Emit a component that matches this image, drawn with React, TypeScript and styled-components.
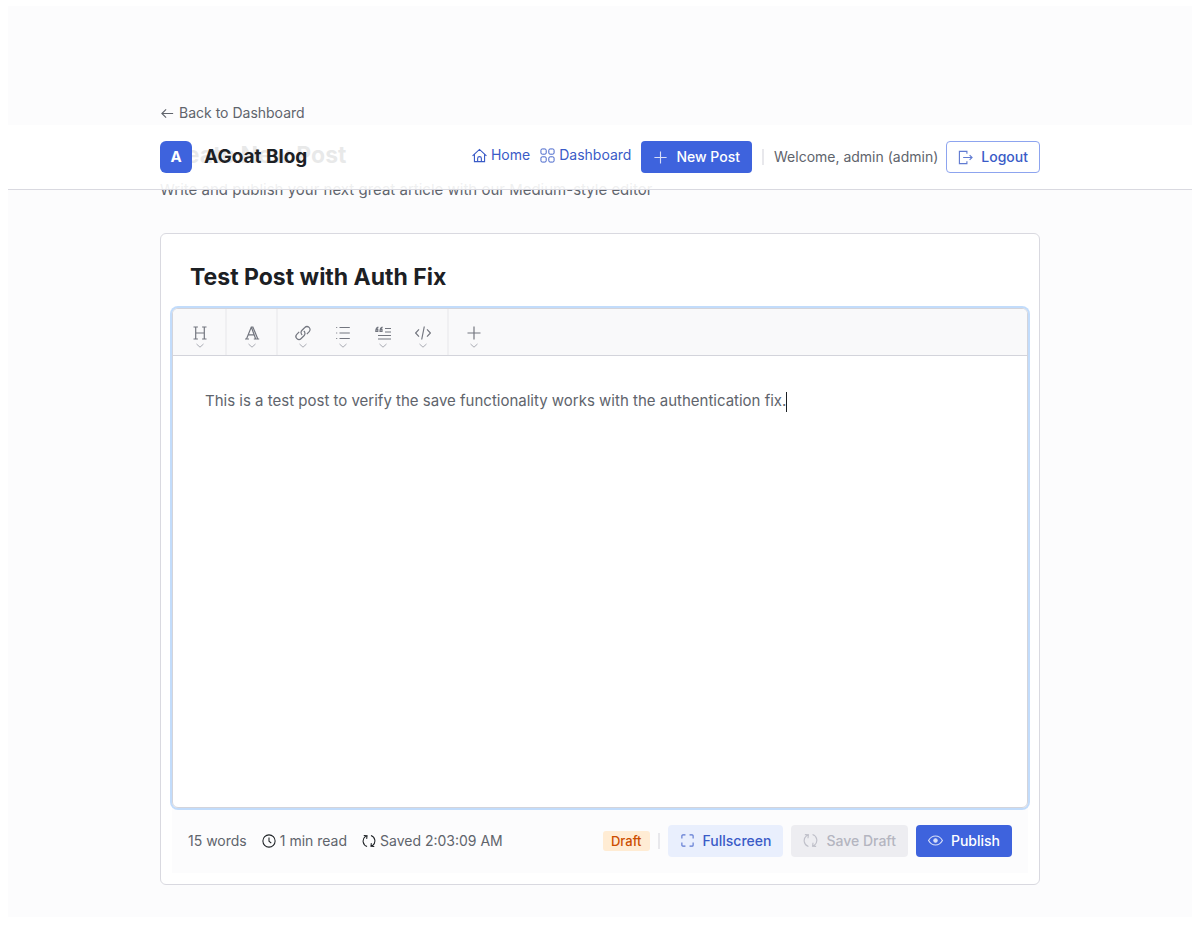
import React from "react";
import styled, { createGlobalStyle } from "styled-components";

const GlobalStyle = createGlobalStyle`
  * { box-sizing: border-box; }
  body {
    margin: 6px 0 10px 8px;
    background: #ffffff;
    color: #1c2024;
    font-family: Inter, "Liberation Sans", sans-serif;
    font-size: 14px;
    line-height: 20px;
  }
  h1, p { margin: 0; }
  button, input { font: inherit; }
`;

const Page = styled.div`
  position: relative;
  background: #fcfcfd;
  padding: 97px 0 32px;
`;

const Header = styled.header`
  position: absolute;
  top: 119px;
  left: 0;
  right: 0;
  z-index: 2;
  background: rgba(255, 255, 255, 0.9);
  border-bottom: 1px solid #d9d9e0;
`;

const Container = styled.div`
  max-width: 880px;
  margin: 0 auto;
`;

const HeaderRow = styled(Container)`
  display: flex;
  align-items: center;
  justify-content: space-between;
  height: 64px;
`;

const Brand = styled.a`
  display: flex;
  align-items: center;
  gap: 12px;
  color: #1c2024;
  text-decoration: none;
  font-size: 19px;
  font-weight: 700;
  line-height: 28px;
`;

const Logo = styled.span`
  display: grid;
  place-items: center;
  width: 32px;
  height: 32px;
  border-radius: 6px;
  background: #3e63dd;
  color: #ffffff;
  font-size: 15px;
`;

const Nav = styled.nav`
  display: flex;
  align-items: center;
  gap: 10px;
`;

const NavLink = styled.a`
  display: flex;
  align-items: center;
  gap: 4px;
  padding-bottom: 4px;
  color: #3a5bc7;
  text-decoration: none;
`;

const Account = styled.div`
  display: flex;
  align-items: center;
  gap: 8px;
  color: #60646c;
`;

const Separator = styled.span`
  width: 2px;
  height: 16px;
  background: #e8e8ec;
`;

type Variant = "solid" | "soft" | "outline" | "muted";
const variants: Record<Variant, string> = {
  solid: "background: #3e63dd; color: #ffffff;",
  soft: "background: #e9effd; color: #3a5bc7;",
  outline: "background: transparent; color: #3a5bc7; border: 1px solid #8da4ef; padding: 0 11px;",
  muted: "background: #ededf1; color: #b4b5c0;",
};

const Button = styled.button<{ $variant: Variant }>`
  display: flex;
  align-items: center;
  gap: 8px;
  height: 32px;
  padding: 0 12px;
  border: 0;
  border-radius: 4px;
  font-weight: 500;
  ${(p) => variants[p.$variant]}
  svg { opacity: 0.8; }
`;

const BackLink = styled.a`
  display: flex;
  align-items: center;
  gap: 4px;
  width: fit-content;
  color: #60646c;
  text-decoration: none;
`;

const Heading = styled.h1`
  margin-top: 16px;
  font-size: 23px;
  font-weight: 700;
  line-height: 32px;
`;

const Subtitle = styled.p`
  margin-top: 7px;
  color: #60646c;
  font-size: 15px;
  line-height: 24px;
`;

const Card = styled.section`
  margin-top: 31px;
  padding: 12px 11px 11px;
  background: #ffffff;
  border: 1px solid #d9d9e0;
  border-radius: 6px;
`;

const TitleInput = styled.input`
  display: block;
  width: 100%;
  height: 62px;
  padding: 0 18px;
  border: 0;
  outline: 0;
  background: transparent;
  color: #1c2024;
  font-size: 23px;
  font-weight: 700;
`;

const Editor = styled.div`
  position: relative;
  border: 1px solid #d3d4db;
  border-radius: 6px;
  box-shadow: 0 0 0 2px #c2dcfb;
  overflow: hidden;
`;

const Toolbar = styled.div`
  display: flex;
  background: #f9f9fa;
  border-bottom: 1px solid #d3d4db;
`;

const ToolGroup = styled.div`
  display: flex;
  padding: 0 4px 0 5px;
  border-right: 2px solid #f0f0f2;
  &:first-child { padding: 0 5px 0 7px; }
  &:last-child { border-right: 0; }
`;

const ToolButton = styled.button`
  display: flex;
  flex-direction: column;
  align-items: center;
  gap: 2px;
  width: 40px;
  height: 46px;
  padding: 16px 0 0;
  border: 0;
  background: transparent;
  color: #73767f;
`;

const Writing = styled.div`
  min-height: 451px;
  padding: 33px 32px;
  outline: 0;
  color: #60646c;
  font-size: 15px;
  line-height: 24px;
`;

const Caret = styled.span`
  display: inline-block;
  width: 1px;
  height: 20px;
  vertical-align: middle;
  background: #1c2024;
`;

const StatusBar = styled.footer`
  display: flex;
  align-items: center;
  justify-content: space-between;
  min-height: 65px;
  padding: 0 16px;
  background: #fcfcfd;
`;

const Stats = styled.div`
  display: flex;
  gap: 15px;
  color: #60646c;
`;

const Stat = styled.span`
  display: flex;
  align-items: center;
  gap: 4px;
  svg { color: #1c2024; }
`;

const Actions = styled.div`
  display: flex;
  align-items: center;
  gap: 8px;
`;

const Badge = styled.span`
  padding: 0 8px;
  border-radius: 3px;
  background: #ffecd4;
  color: #cc4e00;
  font-size: 13px;
  font-weight: 500;
`;

type IconName = keyof typeof shapes;
const shapes = {
  back: <path d="M14 8H2M6.5 3.5L2 8l4.5 4.5" />,
  home: <path d="M.6 8.4L8 1.5l7.4 6.9M2.6 6.8v7.7h10.8V6.8M6 14.5v-3.3a2 2 0 014 0v3.3" />,
  grid: (
    <>
      <rect x="1" y="1" width="5.6" height="5.6" rx="1.4" />
      <rect x="9.4" y="1" width="5.6" height="5.6" rx="1.4" />
      <rect x="1" y="9.4" width="5.6" height="5.6" rx="1.4" />
      <rect x="9.4" y="9.4" width="5.6" height="5.6" rx="1.4" />
    </>
  ),
  plus: <path d="M8 1.5v13M1.5 8h13" />,
  logout: <path d="M9.5 4V1.5h-8v13h8V12M5.5 8H15M12.4 5.4L15 8l-2.6 2.6" />,
  heading: <path d="M1.5 2h4.4M10.1 2h4.4M1.5 14h4.4M10.1 14h4.4M3.7 2v12M12.3 2v12M3.7 8h8.6" />,
  font: <path d="M2.5 14L7.3 2h1.6l4.9 12M7.3 2l4.4 12M4.3 9.8h5.8M1 14h4M9.8 14h5.4" />,
  link: (
    <path d="M7.2 9.9a3 3 0 01-.4-4.4l3-3a3 3 0 014.4 4.2l-2.4 2.4M8.8 6.1a3 3 0 01.4 4.4l-3 3a3 3 0 01-4.4-4.2l2.4-2.4" />
  ),
  list: <path d="M4.5 2.5h10.3M4.5 8h10.3M4.5 13.5h10.3M1.2 2.5h1M1.2 8h1M1.2 13.5h1" />,
  quote: (
    <path d="M10 3.5h6M10 7h6M3 10.5h13M3 14h13M3.4 2.1C1.6 2.5.8 3.9.8 6.3h2v-2H1M7.6 2.1C5.8 2.5 5 3.9 5 6.3h2v-2H5.2" />
  ),
  code: <path d="M4 4.4L.6 8 4 11.6M12 4.4L15.4 8 12 11.6M9.3 1.5L6.7 14.5" />,
  clock: (
    <>
      <circle cx="8" cy="8" r="7" />
      <path d="M8 4v4.3l2.6 2.2" />
    </>
  ),
  refresh: (
    <path d="M5.8 14.4A6.6 6.6 0 013.6 3.1L5.6 2M2 1.7l3.8.2-.5 3.7M10.2 1.6a6.6 6.6 0 012.2 11.3l-2 1.1M14 14.3l-3.8-.2.5-3.7" />
  ),
  fullscreen: <path d="M2 5.8V3a1 1 0 011-1h2.8M10.2 2H13a1 1 0 011 1v2.8M14 10.2V13a1 1 0 01-1 1h-2.8M5.8 14H3a1 1 0 01-1-1v-2.8" />,
  eye: (
    <>
      <path d="M.6 8C2.4 4.8 5 3.2 8 3.2S13.6 4.8 15.4 8C13.6 11.2 11 12.8 8 12.8S2.4 11.2.6 8z" />
      <circle cx="8" cy="8" r="1.8" fill="currentColor" />
    </>
  ),
};

function Icon({ name, size = 15, weight = 1.2 }: { name: IconName; size?: number; weight?: number }) {
  return (
    <svg
      width={size}
      height={size}
      viewBox="0 0 16 16"
      fill="none"
      stroke="currentColor"
      strokeWidth={weight}
      aria-hidden="true"
    >
      {shapes[name]}
    </svg>
  );
}

function Chevron() {
  return (
    <svg width="8" height="6" viewBox="0 0 8 6" fill="none" stroke="#a9abb3" aria-hidden="true">
      <path d="M0.5 1L4 4.2L7.5 1" />
    </svg>
  );
}

const tools: { name: IconName; label: string }[][] = [
  [{ name: "heading", label: "Heading" }],
  [{ name: "font", label: "Font" }],
  [
    { name: "link", label: "Link" },
    { name: "list", label: "List" },
    { name: "quote", label: "Quote" },
    { name: "code", label: "Code" },
  ],
  [{ name: "plus", label: "Insert" }],
];

export default function App() {
  return (
    <>
      <GlobalStyle />
      <Page>
        <Header>
          <HeaderRow>
            <Brand href="#">
              <Logo>A</Logo>
              AGoat Blog
            </Brand>
            <Nav>
              <NavLink href="#"><Icon name="home" />Home</NavLink>
              <NavLink href="#"><Icon name="grid" weight={1} />Dashboard</NavLink>
              <Button $variant="solid" type="button"><Icon name="plus" />New Post</Button>
              <Separator />
              <Account>
                Welcome, admin (admin)
                <Button $variant="outline" type="button"><Icon name="logout" />Logout</Button>
              </Account>
            </Nav>
          </HeaderRow>
        </Header>
        <Container as="main">
          <BackLink href="#"><Icon name="back" />Back to Dashboard</BackLink>
          <Heading>Create New Post</Heading>
          <Subtitle>Write and publish your next great article with our Medium-style editor</Subtitle>
          <Card>
            <TitleInput aria-label="Post title" defaultValue="Test Post with Auth Fix" />
            <Editor>
              <Toolbar role="toolbar" aria-label="Formatting">
                {tools.map((group, i) => (
                  <ToolGroup key={i}>
                    {group.map((tool) => (
                      <ToolButton key={tool.name} type="button" aria-label={tool.label}>
                        <Icon name={tool.name} size={16} />
                        <Chevron />
                      </ToolButton>
                    ))}
                  </ToolGroup>
                ))}
              </Toolbar>
              <Writing role="textbox" aria-label="Post content" contentEditable suppressContentEditableWarning>
                <p>
                  This is a test post to verify the save functionality works with the authentication fix.<Caret />
                </p>
              </Writing>
            </Editor>
            <StatusBar>
              <Stats>
                <Stat>15 words</Stat>
                <Stat><Icon name="clock" size={14} />1 min read</Stat>
                <Stat><Icon name="refresh" size={14} />Saved 2:03:09 AM</Stat>
              </Stats>
              <Actions>
                <Badge>Draft</Badge>
                <Separator />
                <Button $variant="soft" type="button"><Icon name="fullscreen" />Fullscreen</Button>
                <Button $variant="muted" type="button" disabled><Icon name="refresh" />Save Draft</Button>
                <Button $variant="solid" type="button"><Icon name="eye" />Publish</Button>
              </Actions>
            </StatusBar>
          </Card>
        </Container>
      </Page>
    </>
  );
}
